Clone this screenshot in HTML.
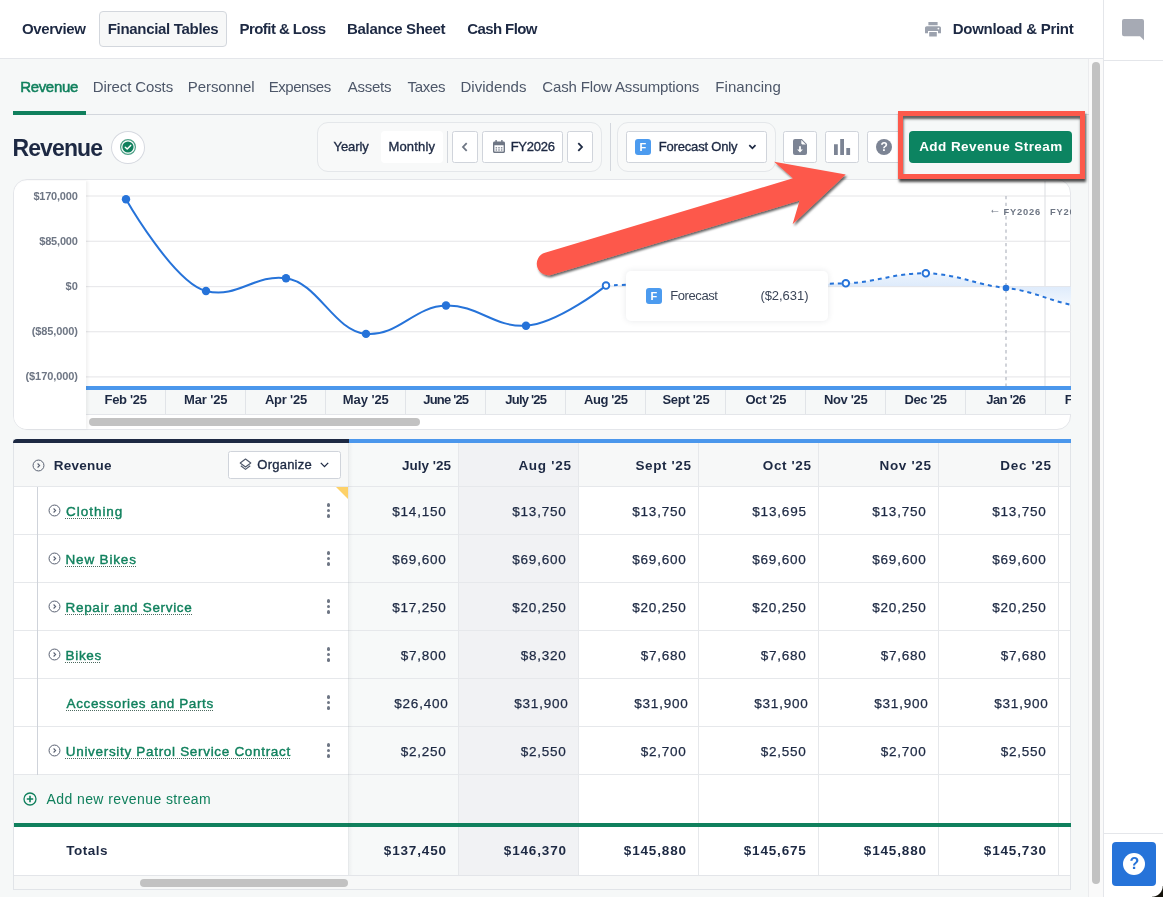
<!DOCTYPE html>
<html lang="en"><head><meta charset="utf-8"><title>Revenue - Financial Tables</title>
<style>
*,*:before,*:after{box-sizing:border-box;margin:0;padding:0}
html,body{width:1163px;height:897px;overflow:hidden;background:#f6f8f8}
body{font-family:"Liberation Sans",sans-serif;color:#1d2943}
#app{position:relative;width:1163px;height:897px;overflow:hidden;background:#f6f8f8;will-change:transform}
#app div,#app svg,#app header,#app nav,#app section,#app aside,#app span{position:absolute}
.t{line-height:0;white-space:nowrap;display:block}
header.topnav{left:0;top:0;width:1103px;height:59px;background:#fff;border-bottom:1px solid #e4e6ea}
header,nav,section,aside{left:0;top:0}
.tabsel{left:99px;top:11px;width:128px;height:36px;border:1px solid #d3d7dd;border-radius:4px;background:#f7f8f8}
aside.rail{left:1103px !important;top:0;width:60px;height:897px;background:#fff;border-left:1px solid #e4e6ea}
.railtop{left:0;top:60px;width:60px;height:1px;background:#e4e6ea}
.raildiv{left:0;top:833px;width:60px;height:1px;background:#e4e6ea}
.helpbtn{left:8px;top:842px;width:44px;height:44px;border-radius:4px;background:#2673d9}
.helpc{left:11px;top:11px;width:22px;height:22px;border-radius:50%;background:#fff}
.vscroll{left:1088px;top:59px;width:15px;height:838px;background:#fafafa;border-left:1px solid #ebecee}
.vthumb{left:3px;top:3px;width:8px;height:822px;border-radius:4px;background:#c2c2c2}
.subline{left:13px;top:114px;width:1076px;height:1px;background:#d3d7dd}
.subsel{left:13px;top:111px;width:73px;height:4px;background:#10805d}
.status{left:111px;top:130.500px;width:34px;height:33px;border-radius:50%;background:#fff;border:1px solid #d5d8df}
.status svg{left:8px;top:7.500px}
.grp{top:122px;height:50px;border:1px solid #e4e7ea;border-radius:11px;background:#f8f9f9}
.seg{top:131px;height:32px;border-radius:4px;background:#fff}
.vdiv{width:1px;background:#d3d7dd}
.btn{top:131px;height:32px;background:#fff;border:1px solid #d0d4db;border-radius:2.500px}
.fico{width:16px;height:16px;border-radius:3px;background:#4c9bef}
.cta{left:909px;top:131px;width:163px;height:32px;border-radius:4px;background:#0c8461}
section.chart{left:0;top:0}
.plot{left:14px;top:180px}
.chart:before{content:"";position:absolute;left:13px;top:179px;width:1058px;height:251px;border:1px solid #e4e6ea;border-radius:14px;background:#fff}
.yaxis{left:14px;top:181px;width:72px;height:248px;background:#fff;border-radius:13px 0 0 13px;box-shadow:2px 0 3px rgba(0,0,0,.06)}
.clipr{overflow:hidden}
.hthumb{height:8px;border-radius:4px;background:#c2c2c2}
.tip{left:626px;top:271px;width:202px;height:50px;border-radius:5px;background:#fff;box-shadow:0 0 6px rgba(30,40,60,.10)}
.tip .fico{top:17px !important}
.grid:before{content:"";position:absolute;left:13px;top:439px;width:1058px;height:451px;border:1px solid #e1e4e8;border-top:0;background:#fff}
.gtop{left:13px;top:439px;width:335.500px;height:4px;background:#1d2943;border-radius:5px 0 0 0}
.gtopb{left:348.500px;top:439px;width:722.500px;height:4px;background:#4b97ec}
.ghead{left:14px;top:443px;width:1056px;height:43px;background:#f7f8f8}
.colbg{top:443px;height:432px}
.colbg.white{top:487px;height:388px;background:#fff}
.leftcol{left:14px;top:487px;width:334px;height:388px;background:#fff}
.addbg{left:14px;top:775px;width:444px;height:48px;background:#f6f8f8}
.vl{top:443px;width:1px;height:432px;background:#e6e8eb}
.hl{left:14px;width:1056px;height:1px;background:#e6e8eb}
.tree{left:37px;top:487px;width:1px;height:288px;background:#cfd3da}
.gline{left:14px;top:823px;width:1057px;height:4px;background:#10805d}
.lshadow{left:348px;top:443px;width:5px;height:432px;background:linear-gradient(90deg,rgba(40,50,70,.11),rgba(40,50,70,.04) 25%,rgba(40,50,70,0))}
.org{left:228px;top:451px;width:113px;height:28px}
.lnk{text-decoration:underline dotted #4d6a60 1px;text-underline-offset:2px}
.kebab{left:326.500px;width:4px;height:16px}
.kebab i{position:absolute;left:0;width:3.500px;height:3.500px;border-radius:50%;background:#6e7684}
.kebab i:nth-child(1){top:0}.kebab i:nth-child(2){top:5.650px}.kebab i:nth-child(3){top:11.300px}
.flag{left:336px;top:487px;width:0;height:0;border-top:12px solid #fdd168;border-left:12px solid transparent}
.gfoot{left:14px;top:875px;width:1056px;height:14px;background:#f7f8f8;border-top:1px solid #e3e5e9}
.redbox{left:898px;top:111px;width:187px;height:68px;border:5px solid #fd594b;box-shadow:.5px 3px 2.500px rgba(0,0,0,.7),inset .5px 3px 2.500px rgba(0,0,0,.62)}
.annot{left:0;top:0;pointer-events:none}
.corner{left:1152px;top:886px;width:11px;height:11px;background:radial-gradient(circle at 0 0,rgba(0,0,0,0) 10.200px,#14120a 11.200px)}
.ico{display:block}
.btn svg{position:absolute}

</style></head>
<body>
<div id="app">
<header class="topnav">
<span class="t" style="left:22.03px;top:28.80px;font-size:15px;font-weight:700;letter-spacing:-0.399px;">Overview</span>
<div class="tabsel"></div>
<span class="t" style="left:107.76px;top:28.80px;font-size:15px;font-weight:700;letter-spacing:-0.316px;">Financial Tables</span>
<span class="t" style="left:239.56px;top:28.80px;font-size:15px;font-weight:700;letter-spacing:-0.566px;">Profit &amp; Loss</span>
<span class="t" style="left:347.06px;top:28.80px;font-size:15px;font-weight:700;letter-spacing:-0.336px;">Balance Sheet</span>
<span class="t" style="left:467.23px;top:28.80px;font-size:15px;font-weight:700;letter-spacing:-0.599px;">Cash Flow</span>
<svg class="ico" style="left:925px;top:21.800px" width="16" height="15" viewBox="0 0 16 15"><path fill="#9ca2ae" d="M3.4 0h9.2v3.2H3.4z M1.8 4.3h12.4c1 0 1.8.8 1.8 1.8v5.1h-3V9H3v2.2H0V6.1c0-1 .8-1.8 1.8-1.8z M4.2 10h7.6v4.6H4.2z"/><circle cx="13.4" cy="6.6" r=".9" fill="#fff"/></svg>
<span class="t" style="left:952.66px;top:28.80px;font-size:15px;font-weight:700;letter-spacing:-0.259px;">Download &amp; Print</span>
</header>
<aside class="rail"><div class="railtop"></div>
<svg class="ico" style="left:18px;top:19px" width="22" height="22" viewBox="0 0 22 22"><path fill="#a6aab4" d="M2 0h18a2 2 0 0 1 2 2v19.2l-4-4H2a2 2 0 0 1-2-2V2a2 2 0 0 1 2-2z"/></svg>
<div class="raildiv"></div><div class="helpbtn"><div class="helpc"></div>
</div></aside>
<span class="t" style="left:1129.45px;top:863.76px;font-size:16px;font-weight:700;color:#2673d9;">?</span>
<div class="vscroll"><div class="vthumb"></div></div>
<nav class="subnav"><div class="subline"></div><div class="subsel"></div>
<span class="t" style="left:20.13px;top:87.30px;font-size:15px;color:#10805d;letter-spacing:-0.311px;-webkit-text-stroke:.5px #10805d;">Revenue</span>
<span class="t" style="left:92.83px;top:87.30px;font-size:15px;color:#4d5769;letter-spacing:-0.122px;">Direct Costs</span>
<span class="t" style="left:187.83px;top:87.30px;font-size:15px;color:#4d5769;letter-spacing:-0.085px;">Personnel</span>
<span class="t" style="left:268.83px;top:87.30px;font-size:15px;color:#4d5769;letter-spacing:-0.505px;">Expenses</span>
<span class="t" style="left:347.70px;top:87.30px;font-size:15px;color:#4d5769;letter-spacing:-0.249px;">Assets</span>
<span class="t" style="left:407.47px;top:87.30px;font-size:15px;color:#4d5769;letter-spacing:-0.295px;">Taxes</span>
<span class="t" style="left:460.53px;top:87.30px;font-size:15px;color:#4d5769;letter-spacing:0.009px;">Dividends</span>
<span class="t" style="left:542.30px;top:87.30px;font-size:15px;color:#4d5769;letter-spacing:-0.151px;">Cash Flow Assumptions</span>
<span class="t" style="left:715.33px;top:87.30px;font-size:15px;color:#4d5769;letter-spacing:0.059px;">Financing</span>
</nav>
<section class="toolbar">
<span class="t" style="left:12.46px;top:147.63px;font-size:23px;font-weight:700;letter-spacing:-0.877px;">Revenue</span>
<div class="status"><svg width="16" height="16" viewBox="0 0 16 16"><circle cx="8" cy="8" r="7.4" fill="none" stroke="#10805d" stroke-width="1.2" opacity=".75"/><circle cx="8" cy="8" r="5.6" fill="#10805d"/><path d="M5.3 8.2l1.9 1.8 3.5-3.6" fill="none" stroke="#fff" stroke-width="1.5" stroke-linecap="round" stroke-linejoin="round"/></svg></div>
<div class="grp" style="left:317px;width:285px"></div>
<div class="seg" style="left:381px;width:62px"></div>
<span class="t" style="left:333.60px;top:146.50px;font-size:13px;letter-spacing:-0.090px;-webkit-text-stroke:.35px #1d2943;">Yearly</span>
<span class="t" style="left:388.38px;top:146.50px;font-size:13px;letter-spacing:0.183px;-webkit-text-stroke:.35px #1d2943;">Monthly</span>
<div class="vdiv" style="left:447px;top:131px;height:32px"></div>
<div class="btn" style="left:452px;width:26px"><svg width="8" height="12" viewBox="0 0 8 12" style="left:8.1px;top:9px"><path d="M5.700 2.100L2 6l3.700 3.900" fill="none" stroke="#6e7684" stroke-width="1.800"/></svg></div>
<div class="btn" style="left:482px;width:81px"><svg width="12" height="13" viewBox="0 0 12 13" style="left:10.3px;top:7.900px"><path fill="#6e7684" d="M2.4 0h1.4v1.4h4.4V0h1.4v1.4h.9c.8 0 1.5.7 1.5 1.5v8.6c0 .8-.7 1.5-1.5 1.5h-9C.7 13 0 12.300 0 11.500V2.900c0-.8.7-1.5 1.500-1.500h.9z M1.400 5.200v6c0 .2.200.4.400.4h8.400c.2 0 .4-.2.400-.4v-6z"/><path fill="#6e7684" d="M2.600 7h1.500v1.400H2.600z M5.250 7h1.500v1.400h-1.500z M7.900 7h1.500v1.400H7.900z M2.600 9.300h1.500v1.400H2.600z M5.250 9.300h1.500v1.400h-1.500z M7.900 9.300h1.500v1.400H7.900z" opacity=".8"/></svg></div>
<span class="t" style="left:510.68px;top:146.50px;font-size:13px;letter-spacing:-0.258px;-webkit-text-stroke:.35px #1d2943;">FY2026</span>
<div class="btn" style="left:567px;width:26px"><svg width="8" height="12" viewBox="0 0 8 12" style="left:7.900px;top:9px"><path d="M2.300 2.100L6 6l-3.700 3.900" fill="none" stroke="#1d2943" stroke-width="1.800"/></svg></div>
<div class="vdiv" style="left:609.5px;top:123px;height:48px"></div>
<div class="grp" style="left:617px;width:159px"></div>
<div class="btn" style="left:626px;width:141px"><div class="fico" style="left:8px;top:7px"></div><svg width="9" height="6" viewBox="0 0 9 6" style="left:121px;top:12px"><path d="M1.300 1.200l3.100 3.100 3.100-3.100" fill="none" stroke="#1d2943" stroke-width="1.700"/></svg></div>
<span class="t" style="left:639.57px;top:147.49px;font-size:11px;font-weight:700;color:#fff;">F</span>
<span class="t" style="left:658.68px;top:146.50px;font-size:13px;letter-spacing:-0.166px;-webkit-text-stroke:.35px #1d2943;">Forecast Only</span>
<div class="btn" style="left:783px;width:34px"><svg width="14" height="16" viewBox="0 0 14 16" style="left:9.2px;top:7px"><path fill="#7c8494" d="M2 0h6.800L14 5.200V14a2 2 0 0 1-2 2H2a2 2 0 0 1-2-2V2a2 2 0 0 1 2-2z"/><path fill="#fff" d="M8.300 .9v3.400c0 .6.500 1.100 1.100 1.100h3.500z M6.100 7.300h1.800v3.100h2L7 13.600 4.100 10.400h2z"/></svg></div>
<div class="btn" style="left:825px;width:34px"><svg width="17" height="16" viewBox="0 0 17 16" style="left:8px;top:7px"><path fill="#7c8494" d="M0 5.200h3.800V16H0z M6.200 0H10v16H6.200z M12.300 9.100h3.800V16h-3.800z"/></svg></div>
<div class="btn" style="left:867px;width:34px"><svg width="16" height="16" viewBox="0 0 16 16" style="left:8.200px;top:7px"><circle cx="8" cy="8" r="8" fill="#7c8494"/></svg></div>
<span class="t" style="left:880.60px;top:147.04px;font-size:12px;font-weight:700;color:#fff;">?</span>
<div class="cta"></div>
<span class="t" style="left:919.19px;top:147.42px;font-size:13.5px;font-weight:700;color:#fff;letter-spacing:0.426px;">Add Revenue Stream</span>
</section>
<section class="chart">
<svg class="plot" width="1057" height="249" viewBox="14 180 1057 249">
<defs><linearGradient id="ag" gradientUnits="userSpaceOnUse" x1="0" y1="268" x2="0" y2="308"><stop offset="0" stop-color="#f1f7fe"/><stop offset=".45" stop-color="#deebfb"/><stop offset="1" stop-color="#f5f9fe"/></linearGradient><clipPath id="cp"><rect x="86" y="181" width="986" height="205"/></clipPath></defs>
<rect x="86" y="195.4" width="986" height="1.200" fill="#e9e9ec"/>
<rect x="86" y="240.7" width="986" height="1.200" fill="#e9e9ec"/>
<rect x="86" y="286" width="986" height="1.200" fill="#e9e9ec"/>
<rect x="86" y="331.1" width="986" height="1.200" fill="#e9e9ec"/>
<rect x="86" y="376.3" width="986" height="1.200" fill="#e9e9ec"/>
<rect x="1044.500" y="181" width="1" height="205" fill="#dcdde1"/>
<path d="M1006 196V386" stroke="#b8bcc5" stroke-width="1.300" stroke-dasharray="3.300 3.400" fill="none"/>
<g clip-path="url(#cp)">
<path d="M606.00 285.60 C606.00 285.60 654.00 283.42 686.00 283.20 C718.00 282.98 734.04 283.39 766.00 283.40 C797.96 283.41 813.84 284.31 845.80 283.30 C877.76 282.29 893.76 272.83 925.80 273.30 C957.84 273.77 973.96 284.65 1006.00 288.00 C1038.04 291.35 1054.00 304.40 1086.00 306.80 L1086 286 L606 286 Z" fill="url(#ag)"/><rect x="606" y="286" width="466" height="1" fill="#e3e6ec"/>
<path d="M126.00 199.30 C126.00 199.30 174.00 283.11 206.00 291.00 C238.00 298.89 254.00 273.91 286.00 278.20 C318.00 282.49 334.00 331.17 366.00 333.90 C398.00 336.63 414.00 306.32 446.00 305.50 C478.00 304.68 494.00 327.69 526.00 325.70 C558.00 323.71 606.00 285.60 606.00 285.60" fill="none" stroke="#2673d9" stroke-width="2"/>
<path d="M606.00 285.60 C606.00 285.60 654.00 283.42 686.00 283.20 C718.00 282.98 734.04 283.39 766.00 283.40 C797.96 283.41 813.84 284.31 845.80 283.30 C877.76 282.29 893.76 272.83 925.80 273.30 C957.84 273.77 973.96 284.65 1006.00 288.00 C1038.04 291.35 1054.00 304.40 1086.00 306.80" fill="none" stroke="#2673d9" stroke-width="2" stroke-dasharray="4 4"/>
<circle cx="126" cy="199.3" r="4.2" fill="#2673d9"/>
<circle cx="206" cy="291" r="4.2" fill="#2673d9"/>
<circle cx="286" cy="278.2" r="4.2" fill="#2673d9"/>
<circle cx="366" cy="333.9" r="4.2" fill="#2673d9"/>
<circle cx="446" cy="305.5" r="4.2" fill="#2673d9"/>
<circle cx="526" cy="325.7" r="4.2" fill="#2673d9"/>
<circle cx="606" cy="285.6" r="3.300" fill="#fff" stroke="#2673d9" stroke-width="1.900"/>
<circle cx="845.8" cy="283.3" r="3.300" fill="#fff" stroke="#2673d9" stroke-width="1.900"/>
<circle cx="925.8" cy="273.3" r="3.300" fill="#fff" stroke="#2673d9" stroke-width="1.900"/>
<circle cx="1006" cy="288" r="3.300" fill="#2673d9"/>
</g>
<rect x="86" y="386" width="986" height="4" fill="#4b97ec"/>
<rect x="86" y="390" width="986" height="24" fill="#f6f8f8"/><rect x="86" y="414" width="986" height="1" fill="#e4e6ea"/>
<rect x="165" y="390" width="1" height="24" fill="#e1e4e8"/>
<rect x="245" y="390" width="1" height="24" fill="#e1e4e8"/>
<rect x="325" y="390" width="1" height="24" fill="#e1e4e8"/>
<rect x="405" y="390" width="1" height="24" fill="#e1e4e8"/>
<rect x="485" y="390" width="1" height="24" fill="#e1e4e8"/>
<rect x="565" y="390" width="1" height="24" fill="#e1e4e8"/>
<rect x="645" y="390" width="1" height="24" fill="#e1e4e8"/>
<rect x="725" y="390" width="1" height="24" fill="#e1e4e8"/>
<rect x="805" y="390" width="1" height="24" fill="#e1e4e8"/>
<rect x="885" y="390" width="1" height="24" fill="#e1e4e8"/>
<rect x="965" y="390" width="1" height="24" fill="#e1e4e8"/>
<rect x="1045" y="390" width="1" height="24" fill="#e1e4e8"/>
</svg>
<div class="yaxis"></div>
<span class="t" style="left:33.40px;top:196.49px;font-size:11px;font-weight:700;color:#6e7684;letter-spacing:-0.209px;">$170,000</span>
<span class="t" style="left:39.30px;top:240.69px;font-size:11px;font-weight:700;color:#6e7684;letter-spacing:-0.207px;">$85,000</span>
<span class="t" style="left:65.50px;top:285.59px;font-size:11px;font-weight:700;color:#6e7684;letter-spacing:0.082px;">$0</span>
<span class="t" style="left:31.70px;top:330.79px;font-size:11px;font-weight:700;color:#6e7684;letter-spacing:-0.109px;">($85,000)</span>
<span class="t" style="left:25.50px;top:375.79px;font-size:11px;font-weight:700;color:#6e7684;letter-spacing:-0.088px;">($170,000)</span>
<span class="t" style="left:104.54px;top:399.80px;font-size:13px;font-weight:700;letter-spacing:-0.306px;">Feb '25</span>
<span class="t" style="left:184.04px;top:399.80px;font-size:13px;font-weight:700;letter-spacing:-0.141px;">Mar '25</span>
<span class="t" style="left:264.90px;top:399.80px;font-size:13px;font-weight:700;letter-spacing:-0.204px;">Apr '25</span>
<span class="t" style="left:342.69px;top:399.80px;font-size:13px;font-weight:700;letter-spacing:-0.053px;">May '25</span>
<span class="t" style="left:423.25px;top:399.80px;font-size:13px;font-weight:700;letter-spacing:-0.812px;">June '25</span>
<span class="t" style="left:505.30px;top:399.80px;font-size:13px;font-weight:700;letter-spacing:-0.779px;">July '25</span>
<span class="t" style="left:584.05px;top:399.80px;font-size:13px;font-weight:700;letter-spacing:-0.401px;">Aug '25</span>
<span class="t" style="left:662.50px;top:399.80px;font-size:13px;font-weight:700;letter-spacing:-0.315px;">Sept '25</span>
<span class="t" style="left:745.39px;top:399.80px;font-size:13px;font-weight:700;letter-spacing:-0.284px;">Oct '25</span>
<span class="t" style="left:823.89px;top:399.80px;font-size:13px;font-weight:700;letter-spacing:-0.331px;">Nov '25</span>
<span class="t" style="left:904.44px;top:399.80px;font-size:13px;font-weight:700;letter-spacing:-0.396px;">Dec '25</span>
<span class="t" style="left:986.30px;top:399.80px;font-size:13px;font-weight:700;letter-spacing:-0.640px;">Jan '26</span>
<div class="clipr" style="left:1046px;top:390px;width:25px;height:24px"><span class="t" style="left:18.69px;top:9.80px;font-size:13px;font-weight:700;letter-spacing:-0.306px;">Feb '26</span></div>
<span class="t" style="left:988.90px;top:209.14px;font-size:12px;font-weight:700;color:#6e7684;font-family:"DejaVu Sans",sans-serif;-webkit-text-stroke:.4px #6e7684;">←</span>
<span class="t" style="left:1003.50px;top:212.08px;font-size:9.3px;font-weight:700;color:#6e7684;letter-spacing:0.810px;">FY2026</span>
<div class="clipr" style="left:1046px;top:200px;width:25px;height:24px"><span class="t" style="left:3.90px;top:12.08px;font-size:9.3px;font-weight:700;color:#6e7684;letter-spacing:0.820px;">FY2027</span></div>
<div class="hthumb" style="left:89px;top:418px;width:331px"></div>
<div class="tip"><div class="fico" style="left:20px;top:18px"></div></div>
<span class="t" style="left:650.57px;top:296.49px;font-size:11px;font-weight:700;color:#fff;">F</span>
<span class="t" style="left:670.28px;top:295.50px;font-size:13px;color:#3b4557;letter-spacing:-0.414px;">Forecast</span>
<span class="t" style="left:760.39px;top:295.50px;font-size:13px;color:#3b4557;letter-spacing:-0.048px;">($2,631)</span>
</section>
<section class="grid">
<div class="gtop"></div><div class="gtopb"></div>
<div class="ghead"></div>
<div class="colbg" style="left:348px;width:110px;background:#f7f9f9"></div>
<div class="colbg" style="left:458px;width:120px;background:#f1f2f4"></div>
<div class="colbg white" style="left:578px;width:492px"></div>
<div class="leftcol"></div><div class="addbg"></div>
<div class="vl" style="left:458px"></div>
<div class="vl" style="left:578px"></div>
<div class="vl" style="left:698px"></div>
<div class="vl" style="left:818px"></div>
<div class="vl" style="left:938px"></div>
<div class="vl" style="left:1058px"></div>
<div class="hl" style="top:486px"></div>
<div class="hl" style="top:534px"></div>
<div class="hl" style="top:582px"></div>
<div class="hl" style="top:630px"></div>
<div class="hl" style="top:678px"></div>
<div class="hl" style="top:726px"></div>
<div class="hl" style="top:774px"></div>
<div class="tree"></div>
<div class="gline"></div>
<div class="lshadow"></div>
<svg class="ico" style="left:31.5px;top:458.7px" width="13" height="13" viewBox="0 0 13 13"><circle cx="6.500" cy="6.500" r="5.450" fill="none" stroke="#596172" stroke-width="1"/><path d="M5.600 4.500l2 2-2 2" fill="none" stroke="#596172" stroke-width="1.100"/></svg>
<span class="t" style="left:53.76px;top:465.62px;font-size:13.5px;font-weight:700;letter-spacing:0.251px;">Revenue</span>
<div class="btn org"><svg width="13" height="13" viewBox="0 0 13 13" style="left:9.500px;top:5.800px"><path d="M6.500 1l5.300 4-5.300 4-5.300-4z M1.800 7.800l4.700 3.600 4.700-3.600" fill="none" stroke="#4d5769" stroke-width="1.100" stroke-linejoin="round"/></svg><svg width="9" height="6" viewBox="0 0 9 6" style="left:90.500px;top:10.200px"><path d="M.8 .9l3.700 3.700L8.200 .9" fill="none" stroke="#1d2943" stroke-width="1.300"/></svg></div>
<span class="t" style="left:257.29px;top:465.30px;font-size:13px;letter-spacing:0.241px;-webkit-text-stroke:.35px #1d2943;">Organize</span>
<span class="t" style="left:402.00px;top:465.82px;font-size:13.5px;font-weight:700;letter-spacing:-0.008px;">July '25</span>
<span class="t" style="left:518.39px;top:465.82px;font-size:13.5px;font-weight:700;letter-spacing:0.721px;">Aug '25</span>
<span class="t" style="left:635.49px;top:465.82px;font-size:13.5px;font-weight:700;letter-spacing:0.602px;">Sept '25</span>
<span class="t" style="left:762.78px;top:465.82px;font-size:13.5px;font-weight:700;letter-spacing:0.613px;">Oct '25</span>
<span class="t" style="left:879.56px;top:465.82px;font-size:13.5px;font-weight:700;letter-spacing:0.650px;">Nov '25</span>
<span class="t" style="left:1000.36px;top:465.82px;font-size:13.5px;font-weight:700;letter-spacing:0.640px;">Dec '25</span>
<svg class="ico" style="left:47.5px;top:504.4px" width="13" height="13" viewBox="0 0 13 13"><circle cx="6.500" cy="6.500" r="5.450" fill="none" stroke="#596172" stroke-width="1"/><path d="M5.600 4.500l2 2-2 2" fill="none" stroke="#596172" stroke-width="1.100"/></svg>
<span class="t lnk" style="left:65.97px;top:511.72px;font-size:13.5px;color:#10805d;letter-spacing:0.980px;-webkit-text-stroke:.4px #10805d;">Clothing</span>
<div class="kebab" style="top:503px"><i></i><i></i><i></i></div>
<span class="t" style="left:392.20px;top:511.72px;font-size:13.5px;letter-spacing:0.806px;-webkit-text-stroke:.25px #1d2943;">$14,150</span>
<span class="t" style="left:512.20px;top:511.72px;font-size:13.5px;letter-spacing:0.806px;-webkit-text-stroke:.25px #1d2943;">$13,750</span>
<span class="t" style="left:632.20px;top:511.72px;font-size:13.5px;letter-spacing:0.806px;-webkit-text-stroke:.25px #1d2943;">$13,750</span>
<span class="t" style="left:752.20px;top:511.72px;font-size:13.5px;letter-spacing:0.841px;-webkit-text-stroke:.25px #1d2943;">$13,695</span>
<span class="t" style="left:872.20px;top:511.72px;font-size:13.5px;letter-spacing:0.806px;-webkit-text-stroke:.25px #1d2943;">$13,750</span>
<span class="t" style="left:992.20px;top:511.72px;font-size:13.5px;letter-spacing:0.806px;-webkit-text-stroke:.25px #1d2943;">$13,750</span>
<svg class="ico" style="left:47.5px;top:552.4px" width="13" height="13" viewBox="0 0 13 13"><circle cx="6.500" cy="6.500" r="5.450" fill="none" stroke="#596172" stroke-width="1"/><path d="M5.600 4.500l2 2-2 2" fill="none" stroke="#596172" stroke-width="1.100"/></svg>
<span class="t lnk" style="left:65.55px;top:559.72px;font-size:13.5px;color:#10805d;letter-spacing:0.826px;-webkit-text-stroke:.4px #10805d;">New Bikes</span>
<div class="kebab" style="top:551px"><i></i><i></i><i></i></div>
<span class="t" style="left:392.20px;top:559.72px;font-size:13.5px;letter-spacing:0.806px;-webkit-text-stroke:.25px #1d2943;">$69,600</span>
<span class="t" style="left:512.20px;top:559.72px;font-size:13.5px;letter-spacing:0.806px;-webkit-text-stroke:.25px #1d2943;">$69,600</span>
<span class="t" style="left:632.20px;top:559.72px;font-size:13.5px;letter-spacing:0.806px;-webkit-text-stroke:.25px #1d2943;">$69,600</span>
<span class="t" style="left:752.20px;top:559.72px;font-size:13.5px;letter-spacing:0.806px;-webkit-text-stroke:.25px #1d2943;">$69,600</span>
<span class="t" style="left:872.20px;top:559.72px;font-size:13.5px;letter-spacing:0.806px;-webkit-text-stroke:.25px #1d2943;">$69,600</span>
<span class="t" style="left:992.20px;top:559.72px;font-size:13.5px;letter-spacing:0.806px;-webkit-text-stroke:.25px #1d2943;">$69,600</span>
<svg class="ico" style="left:47.5px;top:600.4px" width="13" height="13" viewBox="0 0 13 13"><circle cx="6.500" cy="6.500" r="5.450" fill="none" stroke="#596172" stroke-width="1"/><path d="M5.600 4.500l2 2-2 2" fill="none" stroke="#596172" stroke-width="1.100"/></svg>
<span class="t lnk" style="left:65.55px;top:607.72px;font-size:13.5px;color:#10805d;letter-spacing:0.670px;-webkit-text-stroke:.4px #10805d;">Repair and Service</span>
<div class="kebab" style="top:599px"><i></i><i></i><i></i></div>
<span class="t" style="left:392.20px;top:607.72px;font-size:13.5px;letter-spacing:0.806px;-webkit-text-stroke:.25px #1d2943;">$17,250</span>
<span class="t" style="left:512.20px;top:607.72px;font-size:13.5px;letter-spacing:0.806px;-webkit-text-stroke:.25px #1d2943;">$20,250</span>
<span class="t" style="left:632.20px;top:607.72px;font-size:13.5px;letter-spacing:0.806px;-webkit-text-stroke:.25px #1d2943;">$20,250</span>
<span class="t" style="left:752.20px;top:607.72px;font-size:13.5px;letter-spacing:0.806px;-webkit-text-stroke:.25px #1d2943;">$20,250</span>
<span class="t" style="left:872.20px;top:607.72px;font-size:13.5px;letter-spacing:0.806px;-webkit-text-stroke:.25px #1d2943;">$20,250</span>
<span class="t" style="left:992.20px;top:607.72px;font-size:13.5px;letter-spacing:0.806px;-webkit-text-stroke:.25px #1d2943;">$20,250</span>
<svg class="ico" style="left:47.5px;top:648.4px" width="13" height="13" viewBox="0 0 13 13"><circle cx="6.500" cy="6.500" r="5.450" fill="none" stroke="#596172" stroke-width="1"/><path d="M5.600 4.500l2 2-2 2" fill="none" stroke="#596172" stroke-width="1.100"/></svg>
<span class="t lnk" style="left:65.55px;top:655.72px;font-size:13.5px;color:#10805d;letter-spacing:0.666px;-webkit-text-stroke:.4px #10805d;">Bikes</span>
<div class="kebab" style="top:647px"><i></i><i></i><i></i></div>
<span class="t" style="left:400.75px;top:655.72px;font-size:13.5px;letter-spacing:0.759px;-webkit-text-stroke:.25px #1d2943;">$7,800</span>
<span class="t" style="left:520.75px;top:655.72px;font-size:13.5px;letter-spacing:0.759px;-webkit-text-stroke:.25px #1d2943;">$8,320</span>
<span class="t" style="left:640.75px;top:655.72px;font-size:13.5px;letter-spacing:0.759px;-webkit-text-stroke:.25px #1d2943;">$7,680</span>
<span class="t" style="left:760.75px;top:655.72px;font-size:13.5px;letter-spacing:0.759px;-webkit-text-stroke:.25px #1d2943;">$7,680</span>
<span class="t" style="left:880.75px;top:655.72px;font-size:13.5px;letter-spacing:0.759px;-webkit-text-stroke:.25px #1d2943;">$7,680</span>
<span class="t" style="left:1000.75px;top:655.72px;font-size:13.5px;letter-spacing:0.759px;-webkit-text-stroke:.25px #1d2943;">$7,680</span>
<span class="t lnk" style="left:66.60px;top:703.72px;font-size:13.5px;color:#10805d;letter-spacing:0.616px;-webkit-text-stroke:.4px #10805d;">Accessories and Parts</span>
<div class="kebab" style="top:695px"><i></i><i></i><i></i></div>
<span class="t" style="left:394.20px;top:703.72px;font-size:13.5px;letter-spacing:0.806px;-webkit-text-stroke:.25px #1d2943;">$26,400</span>
<span class="t" style="left:514.20px;top:703.72px;font-size:13.5px;letter-spacing:0.806px;-webkit-text-stroke:.25px #1d2943;">$31,900</span>
<span class="t" style="left:634.20px;top:703.72px;font-size:13.5px;letter-spacing:0.806px;-webkit-text-stroke:.25px #1d2943;">$31,900</span>
<span class="t" style="left:754.20px;top:703.72px;font-size:13.5px;letter-spacing:0.806px;-webkit-text-stroke:.25px #1d2943;">$31,900</span>
<span class="t" style="left:874.20px;top:703.72px;font-size:13.5px;letter-spacing:0.806px;-webkit-text-stroke:.25px #1d2943;">$31,900</span>
<span class="t" style="left:994.20px;top:703.72px;font-size:13.5px;letter-spacing:0.806px;-webkit-text-stroke:.25px #1d2943;">$31,900</span>
<svg class="ico" style="left:47.5px;top:744.4px" width="13" height="13" viewBox="0 0 13 13"><circle cx="6.500" cy="6.500" r="5.450" fill="none" stroke="#596172" stroke-width="1"/><path d="M5.600 4.500l2 2-2 2" fill="none" stroke="#596172" stroke-width="1.100"/></svg>
<span class="t lnk" style="left:65.76px;top:751.72px;font-size:13.5px;color:#10805d;letter-spacing:0.687px;-webkit-text-stroke:.4px #10805d;">University Patrol Service Contract</span>
<div class="kebab" style="top:743px"><i></i><i></i><i></i></div>
<span class="t" style="left:400.75px;top:751.72px;font-size:13.5px;letter-spacing:0.759px;-webkit-text-stroke:.25px #1d2943;">$2,250</span>
<span class="t" style="left:520.75px;top:751.72px;font-size:13.5px;letter-spacing:0.759px;-webkit-text-stroke:.25px #1d2943;">$2,550</span>
<span class="t" style="left:640.75px;top:751.72px;font-size:13.5px;letter-spacing:0.759px;-webkit-text-stroke:.25px #1d2943;">$2,700</span>
<span class="t" style="left:760.75px;top:751.72px;font-size:13.5px;letter-spacing:0.759px;-webkit-text-stroke:.25px #1d2943;">$2,550</span>
<span class="t" style="left:880.75px;top:751.72px;font-size:13.5px;letter-spacing:0.759px;-webkit-text-stroke:.25px #1d2943;">$2,700</span>
<span class="t" style="left:1000.75px;top:751.72px;font-size:13.5px;letter-spacing:0.759px;-webkit-text-stroke:.25px #1d2943;">$2,550</span>
<div class="flag"></div>
<svg class="ico" style="left:23px;top:792px" width="14" height="14" viewBox="0 0 14 14"><circle cx="7" cy="7" r="6" fill="none" stroke="#10805d" stroke-width="1.300"/><path d="M7 3.800v6.400M3.800 7h6.400" stroke="#10805d" stroke-width="1.600"/></svg>
<span class="t" style="left:46.50px;top:799.35px;font-size:14px;color:#10805d;letter-spacing:0.409px;">Add new revenue stream</span>
<span class="t" style="left:66.30px;top:851.42px;font-size:13.5px;font-weight:700;letter-spacing:0.499px;">Totals</span>
<span class="t" style="left:383.80px;top:851.42px;font-size:13.5px;font-weight:700;letter-spacing:0.849px;">$137,450</span>
<span class="t" style="left:503.80px;top:851.42px;font-size:13.5px;font-weight:700;letter-spacing:0.849px;">$146,370</span>
<span class="t" style="left:623.80px;top:851.42px;font-size:13.5px;font-weight:700;letter-spacing:0.849px;">$145,880</span>
<span class="t" style="left:743.80px;top:851.42px;font-size:13.5px;font-weight:700;letter-spacing:0.818px;">$145,675</span>
<span class="t" style="left:863.80px;top:851.42px;font-size:13.5px;font-weight:700;letter-spacing:0.849px;">$145,880</span>
<span class="t" style="left:983.80px;top:851.42px;font-size:13.5px;font-weight:700;letter-spacing:0.849px;">$145,730</span>
<div class="gfoot"><div class="hthumb" style="left:125.500px;top:2.800px;width:208.500px"></div></div>
</section>
<div class="redbox"></div>
<svg class="annot" width="1163" height="897" viewBox="0 0 1163 897"><defs><filter id="sh" x="-5%" y="-10%" width="110%" height="130%"><feDropShadow dx="1.500" dy="2" stdDeviation="1.300" flood-color="#000" flood-opacity=".6"/></filter></defs>
<path filter="url(#sh)" fill="#fd594b" d="M544.960 252.770 L793 178.300 L774.100 161.700 L845.700 174.400 L792.600 224.300 L799.600 200.600 L551.440 274.630 A11.400 11.400 0 0 1 544.960 252.770Z"/></svg>
<div class="corner"></div>
</div>
</body></html>
